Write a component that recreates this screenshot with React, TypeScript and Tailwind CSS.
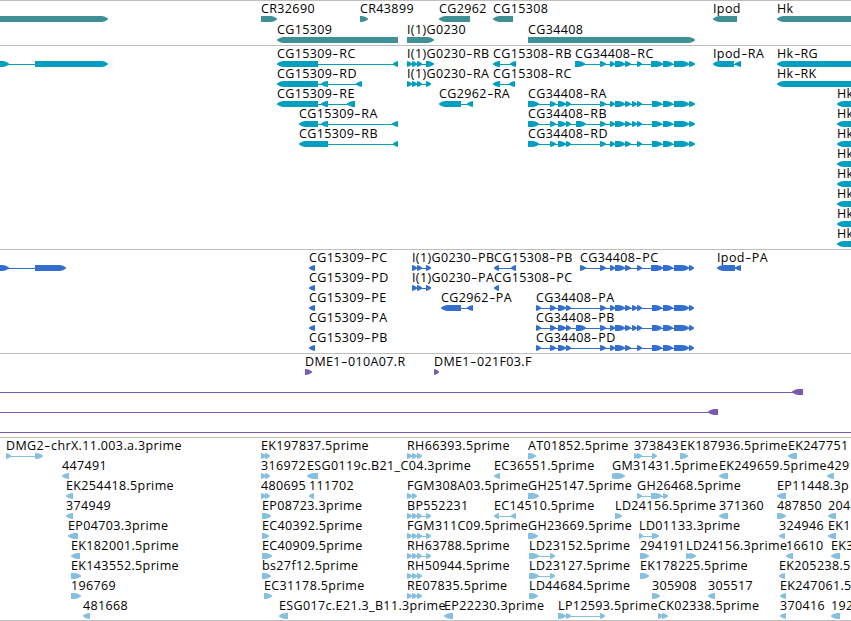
import clsx from "clsx";

const VIEW_WIDTH = 851;

type Block = [number, number];

interface Feature {
  label?: string;
  dir: ">" | "<";
  blocks: Block[];
  // connector line, when it reaches past the blocks
  line?: Block;
}

interface TrackProps {
  color: string;
  height: string;
  rowHeight?: string;
  rows: Feature[][];
}

const fwd = (label: string, ...blocks: Block[]): Feature => ({ label, dir: ">", blocks });
const rev = (label: string, ...blocks: Block[]): Feature => ({ label, dir: "<", blocks });

// Exons shared by the CG34408 isoforms
const first3: Block[] = [[550, 556], [558, 566], [566, 571]];
const middle: Block[] = [[600, 606], [610, 615], [615, 625], [625, 631]];
const short: Block[] = [[632, 637], [637, 642]];
const tail: Block[] = [[652, 662], [663, 673], [674, 689]];
const tailC: Block[] = [[651, 663], [663, 673], [674, 689]];
const trio: Block[] = [[407, 412], [412, 417], [417, 422]];

const genes: Feature[][] = [
  [
    fwd("", [-10, 108]),
    fwd("CR32690", [261, 277]),
    fwd("CR43899", [360, 368]),
    rev("CG2962", [439, 470]),
    rev("CG15308", [493, 513]),
    rev("Ipod", [713, 737]),
    rev("Hk", [777, 870]),
  ],
  [
    rev("CG15309", [277, 398]),
    fwd("I(1)G0230", [407, 434]),
    fwd("CG34408", [528, 695]),
  ],
];

const hk = rev("Hk", [837, 870]);

const transcripts: Feature[][] = [
  [
    fwd("", [-10, 9], [35, 108]),
    rev("CG15309-RC", [277, 318], [393, 398]),
    fwd("I(1)G0230-RB", ...trio, [426, 434]),
    rev("CG15308-RB", [493, 500], [510, 516]),
    fwd("CG34408-RC", [575, 585], ...middle, [637, 642], ...tailC, [689, 695]),
    rev("Ipod-RA", [713, 734], [735, 741]),
    rev("Hk-RG", [777, 870]),
  ],
  [
    rev("CG15309-RD", [277, 318], [321, 328], [356, 362]),
    fwd("I(1)G0230-RA", ...trio, [426, 431]),
    rev("CG15308-RC", [493, 500], [509, 515]),
    rev("Hk-RK", [777, 870]),
  ],
  [
    rev("CG15309-RE", [277, 318], [321, 328], [347, 355]),
    rev("CG2962-RA", [439, 461], [467, 473]),
    fwd("CG34408-RA", [528, 539], ...first3, ...middle, ...short, ...tail, [689, 695]),
    hk,
  ],
  [
    rev("CG15309-RA", [299, 318], [321, 328], [392, 398]),
    fwd("CG34408-RB", [528, 539], ...first3, [576, 586], ...middle, ...short, ...tail, [689, 695]),
    hk,
  ],
  [
    rev("CG15309-RB", [299, 328], [393, 398]),
    fwd("CG34408-RD", [528, 539], ...first3, ...middle, [637, 642], ...tail, [689, 695]),
    hk,
  ],
  [hk],
  [hk],
  [hk],
  [hk],
  [hk],
];

const proteins: Feature[][] = [
  [
    fwd("", [-10, 9], [35, 66]),
    rev("CG15309-PC", [309, 315]),
    fwd("I(1)G0230-PB", [412, 417], [417, 422], [426, 431]),
    rev("CG15308-PB", [494, 499], [511, 516]),
    fwd("CG34408-PC", [580, 586], ...middle, [637, 642], ...tailC, [689, 694]),
    rev("Ipod-PA", [717, 735], [735, 741]),
  ],
  [
    rev("CG15309-PD", [309, 315]),
    fwd("I(1)G0230-PA", [412, 417], [417, 422], [426, 431]),
    rev("CG15308-PC", [494, 499]),
  ],
  [
    rev("CG15309-PE", [309, 315]),
    rev("CG2962-PA", [441, 461], [467, 473]),
    fwd("CG34408-PA", [536, 541], ...first3, ...middle, ...short, ...tail, [689, 694]),
  ],
  [
    rev("CG15309-PA", [309, 315]),
    fwd("CG34408-PB", [536, 541], ...first3, [576, 586], ...middle, ...short, ...tail, [689, 694]),
  ],
  [
    rev("CG15309-PB", [309, 315]),
    fwd("CG34408-PD", [536, 541], ...first3, ...middle, [637, 642], ...tail, [689, 694]),
  ],
];

const bacs: Feature[][] = [
  [fwd("DME1-010A07.R", [305, 312]), fwd("DME1-021F03.F", [434, 439])],
  [{ dir: "<", blocks: [[792, 803]], line: [0, 800] }],
  [{ dir: "<", blocks: [[708, 718]], line: [0, 715] }],
  [{ dir: "<", blocks: [], line: [0, VIEW_WIDTH] }],
];

const ests: Feature[][] = [
  [
    fwd("DMG2-chrX.11.003.a.3prime", [6, 11], [35, 43]),
    fwd("EK197837.5prime", [261, 266], [265, 270]),
    fwd("RH66393.5prime", ...trio),
    fwd("AT01852.5prime", [528, 536]),
    fwd("373843", [634, 638], [637, 642], [652, 657]),
    fwd("EK187936.5prime", [680, 688]),
    rev("EK247751", [788, 797]),
  ],
  [
    rev("447491", [62, 69]),
    fwd("316972", [261, 266], [265, 270]),
    rev("ESG0119c.B21_C04.3prime", [307, 318]),
    rev("EC36551.5prime", [494, 500]),
    fwd("GM31431.5prime", [612, 616], [614, 625]),
    rev("EK249659.5prime", [719, 728]),
    rev("429", [827, 834]),
  ],
  [
    rev("EK254418.5prime", [66, 73]),
    fwd("480695", [261, 266], [265, 270]),
    rev("111702", [309, 314]),
    fwd("FGM308A03.5prime", [407, 412], [412, 417]),
    fwd("GH25147.5prime", [528, 539]),
    fwd("GH26468.5prime", [637, 642], [651, 662], [663, 668]),
    rev("EP11448.3p", [777, 786]),
  ],
  [
    rev("374949", [66, 73]),
    fwd("EP08723.3prime", [262, 271]),
    fwd("BP552231", ...trio, [426, 431]),
    rev("EC14510.5prime", [494, 499], [511, 516]),
    fwd("LD24156.5prime", [615, 622]),
    rev("371360", [719, 728]),
    fwd("487850", [777, 786]),
    rev("204", [828, 836]),
  ],
  [
    rev("EP04703.3prime", [68, 78]),
    fwd("EC40392.5prime", [262, 269]),
    fwd("FGM311C09.5prime", ...trio, [426, 431]),
    fwd("GH23669.5prime", [528, 538]),
    fwd("LD01133.3prime", [639, 643], [652, 659]),
    rev("324946", [779, 785]),
    rev("EK1", [828, 836]),
  ],
  [
    rev("EK182001.5prime", [71, 80]),
    fwd("EC40909.5prime", [262, 272]),
    fwd("RH63788.5prime", ...trio, [426, 431]),
    fwd("LD23152.5prime", [529, 539], [550, 555]),
    fwd("294191", [640, 649]),
    fwd("LD24156.3prime", [686, 691], [689, 696]),
    rev("16610", [786, 793]),
    rev("EK3", [831, 840]),
  ],
  [
    fwd("EK143552.5prime", [71, 81]),
    fwd("bs27f12.5prime", [262, 271]),
    fwd("RH50944.5prime", ...trio),
    fwd("LD23127.5prime", [529, 539], [550, 555]),
    fwd("EK178225.5prime", [640, 649]),
    rev("EK205238.5", [779, 785]),
  ],
  [
    fwd("196769", [71, 81]),
    fwd("EC31178.5prime", [264, 272]),
    fwd("RE07835.5prime", ...trio),
    fwd("LD44684.5prime", [529, 538]),
    fwd("305908", [652, 660]),
    rev("305517", [708, 715]),
    rev("EK247061.5", [780, 786]),
  ],
  [
    rev("481668", [83, 90]),
    rev("ESG017c.E21.3_B11.3prime", [279, 288]),
    rev("EP22230.3prime", [444, 453]),
    fwd("LP12593.5prime", [558, 566], [566, 571], [600, 605]),
    fwd("CK02338.5prime", [658, 663], [662, 668]),
    rev("370416", [780, 786]),
    rev("192", [831, 840]),
  ],
];

// A block is a bar with a pointed end; blocks shorter than the tip are triangles
function blockPoints([start, end]: Block, dir: ">" | "<") {
  const tip = Math.min(6, end - start);
  if (dir === ">") {
    return `${start},0 ${end - tip},0 ${end - tip / 2},0.8 ${end},2.5 ${end},3.5 ${end - tip / 2},5.2 ${end - tip},6 ${start},6`;
  }
  return `${end},0 ${start + tip},0 ${start + tip / 2},0.8 ${start},2.5 ${start},3.5 ${start + tip / 2},5.2 ${start + tip},6 ${end},6`;
}

function Glyph({ feature }: { feature: Feature }) {
  const { blocks, dir } = feature;
  const line =
    feature.line ?? (blocks.length > 1 ? [blocks[0][0] + 1, blocks[blocks.length - 1][1] - 1] : null);

  return (
    <g>
      {line && <rect x={line[0]} y={3} width={line[1] - line[0]} height={1} />}
      {blocks.map((block) => (
        <polygon key={block[0]} points={blockPoints(block, dir)} />
      ))}
    </g>
  );
}

// Hyphens are drawn wide so that the isoform suffix stands apart
function Label({ text, x }: { text: string; x: number }) {
  const [name, suffix] = text.split("-");

  return (
    <span className="absolute top-0 whitespace-nowrap" style={{ left: x }}>
      {name}
      {suffix && (
        <>
          <span className="inline-block w-[7px] scale-x-150 text-center">-</span>
          {suffix}
        </>
      )}
    </span>
  );
}

function Track({ color, height, rowHeight = "h-5", rows }: TrackProps) {
  return (
    <section className={clsx("overflow-hidden border-t border-[#bebebe] pt-px", height)}>
      {rows.map((features, i) => (
        <div key={i} className={rowHeight}>
          <div className="relative h-3.5">
            {features.map(
              (feature) =>
                feature.label && (
                  <Label key={feature.label} text={feature.label} x={feature.blocks[0][0]} />
                ),
            )}
          </div>
          <svg className={clsx("block", color)} width={VIEW_WIDTH} height={6} aria-hidden="true">
            {features.map((feature, j) => (
              <Glyph key={j} feature={feature} />
            ))}
          </svg>
        </div>
      ))}
    </section>
  );
}

export default function App() {
  return (
    <main className="h-[621px] w-[851px] overflow-hidden border-b border-[#bebebe] bg-white font-['Open_Sans','DejaVu_Sans',sans-serif] text-[12.5px] leading-[14px] tracking-[0.37px] text-black">
      <Track color="fill-[#3f9094]" height="h-[45px]" rowHeight="h-[21px]" rows={genes} />
      <Track color="fill-[#009fbf]" height="h-[204px]" rows={transcripts} />
      <Track color="fill-[#326fd0]" height="h-[104px]" rows={proteins} />
      <Track color="fill-[#7a5aad]" height="h-[84px]" rows={bacs} />
      <Track color="fill-[#87bfdf]" height="h-[183px]" rows={ests} />
    </main>
  );
}
